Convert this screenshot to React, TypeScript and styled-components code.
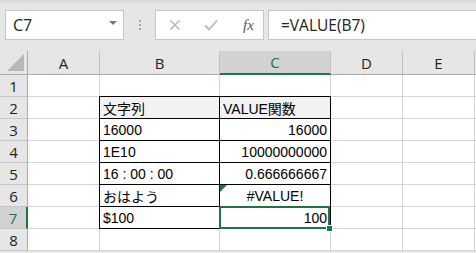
import React from 'react'
import styled, { createGlobalStyle, css } from 'styled-components'

const GlobalStyle = createGlobalStyle`
  html, body {
    margin: 0;
    padding: 0;
    background: #ffffff;
    overflow: hidden;
  }
`

const Page = styled.div`
  width: 476px;
  height: 253px;
  background: #e6e6e6;
  font-family: "Liberation Sans", "Noto Sans CJK JP", sans-serif;
  overflow: hidden;
`

const Toolbar = styled.div`
  height: 51px;
  box-sizing: border-box;
  padding: 10px 0 0 5px;
  display: flex;
  align-items: flex-start;
  background: linear-gradient(#d6d6d6 0px, #e6e6e6 4px);
`

const NameBox = styled.div`
  width: 119px;
  height: 30px;
  box-sizing: border-box;
  border: 1px solid #c6c6c6;
  background: #fff;
  display: flex;
  align-items: center;
  justify-content: space-between;
  padding: 0 6px 0 7px;
  font-family: "Open Sans", "Noto Sans", sans-serif;
  font-size: 16px;
  color: #222;
`

const DropArrow = styled.span`
  width: 0;
  height: 0;
  border-left: 4px solid transparent;
  border-right: 4px solid transparent;
  border-top: 4px solid #7a7a7a;
  margin-top: -5px;
`

const Dots = styled.div`
  width: 31px;
  height: 30px;
  display: flex;
  flex-direction: column;
  align-items: center;
  justify-content: center;
  gap: 2px;

  span {
    width: 2px;
    height: 2px;
    background: #a6a6a6;
  }
`

const ButtonsBox = styled.div`
  width: 109px;
  height: 30px;
  box-sizing: border-box;
  border: 1px solid #c6c6c6;
  background: #fff;
  display: flex;
  align-items: center;
  padding-left: 13px;
  gap: 23px;
`

const FxLabel = styled.span`
  font-family: "Liberation Serif", serif;
  font-style: italic;
  font-size: 15px;
  color: #555;
  margin-left: 2px;
`

const FormulaInput = styled.div`
  flex: 1;
  margin-left: 4px;
  height: 30px;
  box-sizing: border-box;
  border: 1px solid #c6c6c6;
  border-right: none;
  background: #fff;
  display: flex;
  align-items: center;
  padding-left: 12px;
  font-family: "Open Sans", "Noto Sans", sans-serif;
  font-size: 15.5px;
  color: #222;
`

const Sheet = styled.div`
  display: grid;
  grid-template-columns: 28px 72px 120px 111px 72px 72px 20px;
  grid-template-rows: 24px repeat(8, 22px);
  background: #fff;
`

const Corner = styled.div`
  position: relative;
  background: #e6e6e6;
  border-right: 1px solid #ababab;
  border-bottom: 1px solid #ababab;

  &::after {
    content: '';
    position: absolute;
    right: 3px;
    bottom: 3px;
    width: 0;
    height: 0;
    border-left: 17px solid transparent;
    border-bottom: 17px solid #b7b7b7;
  }
`

const ColHead = styled.div<{ $active?: boolean }>`
  box-sizing: border-box;
  background: #e6e6e6;
  border-right: 1px solid #c0c0c0;
  border-bottom: 1px solid #ababab;
  display: flex;
  align-items: center;
  justify-content: center;
  font-family: "Open Sans", "Noto Sans", sans-serif;
  font-size: 15px;
  color: #222;
  ${({ $active }) =>
    $active &&
    css`
      background: #d2d2d2;
      color: #217346;
      border-bottom: 2px solid #217346;
    `}
`

const RowHead = styled.div<{ $active?: boolean }>`
  box-sizing: border-box;
  background: #e6e6e6;
  border-right: 1px solid #ababab;
  border-bottom: 1px solid #c6c6c6;
  display: flex;
  align-items: center;
  justify-content: center;
  font-family: "Open Sans", "Noto Sans", sans-serif;
  font-size: 15px;
  color: #222;
  ${({ $active }) =>
    $active &&
    css`
      background: #d2d2d2;
      color: #217346;
      border-right: 2px solid #217346;
    `}
`

const Cell = styled.div<{
  $boxed?: boolean
  $head?: boolean
  $align?: 'left' | 'right' | 'center'
  $selected?: boolean
  $error?: boolean
}>`
  position: relative;
  box-sizing: border-box;
  border-right: 1px solid #d4d4d4;
  border-bottom: 1px solid #d4d4d4;
  display: flex;
  align-items: center;
  padding: 1px 3px 0 3px;
  font-size: 14px;
  color: #000;
  white-space: nowrap;
  justify-content: ${({ $align }) =>
    $align === 'right' ? 'flex-end' : $align === 'center' ? 'center' : 'flex-start'};
  background: ${({ $head }) => ($head ? '#f2f2f2' : '#fff')};

  ${({ $boxed }) =>
    $boxed &&
    css`
      &::before {
        content: '';
        position: absolute;
        inset: -1px;
        border: 1px solid #000;
        pointer-events: none;
        z-index: 1;
      }
    `}

  ${({ $error }) =>
    $error &&
    css`
      &::after {
        content: '';
        position: absolute;
        left: 0;
        top: 0;
        width: 0;
        height: 0;
        border-top: 7px solid #1e7b3c;
        border-right: 7px solid transparent;
        z-index: 2;
      }
    `}

  ${({ $selected }) =>
    $selected &&
    css`
      &::after {
        content: '';
        position: absolute;
        left: -1px;
        top: -1px;
        right: 0;
        bottom: -1px;
        border: 2px solid #217346;
        pointer-events: none;
        z-index: 3;
      }
    `}
`

const FillHandle = styled.span`
  position: absolute;
  right: -3px;
  bottom: -4px;
  width: 5px;
  height: 5px;
  background: #217346;
  border: 1px solid #fff;
  z-index: 4;
`

const columns = ['A', 'B', 'C', 'D', 'E', '']

type Row = { b: string; c: string; cAlign: 'left' | 'right' | 'center'; head?: boolean; error?: boolean }

const tableRows: Record<number, Row> = {
  2: { b: '文字列', c: 'VALUE関数', cAlign: 'left', head: true },
  3: { b: '16000', c: '16000', cAlign: 'right' },
  4: { b: '1E10', c: '10000000000', cAlign: 'right' },
  5: { b: '16 : 00 : 00', c: '0.666666667', cAlign: 'right' },
  6: { b: 'おはよう', c: '#VALUE!', cAlign: 'center', error: true },
  7: { b: '$100', c: '100', cAlign: 'right' },
}

const CrossIcon = () => (
  <svg width="12" height="12" viewBox="0 0 12 12">
    <path d="M1.5 1.5 L10.5 10.5 M10.5 1.5 L1.5 10.5" stroke="#b8b8b8" strokeWidth="1.6" fill="none" />
  </svg>
)

const CheckIcon = () => (
  <svg width="14" height="12" viewBox="0 0 14 12">
    <path d="M1 6.5 L5 10.5 L13 1.5" stroke="#b8b8b8" strokeWidth="1.8" fill="none" />
  </svg>
)

export default function App() {
  return (
    <Page>
      <GlobalStyle />
      <Toolbar>
        <NameBox>
          C7
          <DropArrow />
        </NameBox>
        <Dots>
          <span />
          <span />
          <span />
        </Dots>
        <ButtonsBox>
          <CrossIcon />
          <CheckIcon />
          <FxLabel>fx</FxLabel>
        </ButtonsBox>
        <FormulaInput>=VALUE(B7)</FormulaInput>
      </Toolbar>
      <Sheet>
        <Corner />
        {columns.map((col, i) => (
          <ColHead key={i} $active={col === 'C'}>
            {col}
          </ColHead>
        ))}
        {[1, 2, 3, 4, 5, 6, 7, 8].map(r => {
          const row = tableRows[r]
          return (
            <React.Fragment key={r}>
              <RowHead $active={r === 7}>{r}</RowHead>
              <Cell />
              <Cell $boxed={!!row} $head={row?.head}>
                {row?.b}
              </Cell>
              <Cell
                $boxed={!!row}
                $head={row?.head}
                $align={row?.cAlign}
                $error={row?.error}
                $selected={r === 7}
              >
                {row?.c}
                {r === 7 && <FillHandle />}
              </Cell>
              <Cell />
              <Cell />
              <Cell />
            </React.Fragment>
          )
        })}
      </Sheet>
    </Page>
  )
}
